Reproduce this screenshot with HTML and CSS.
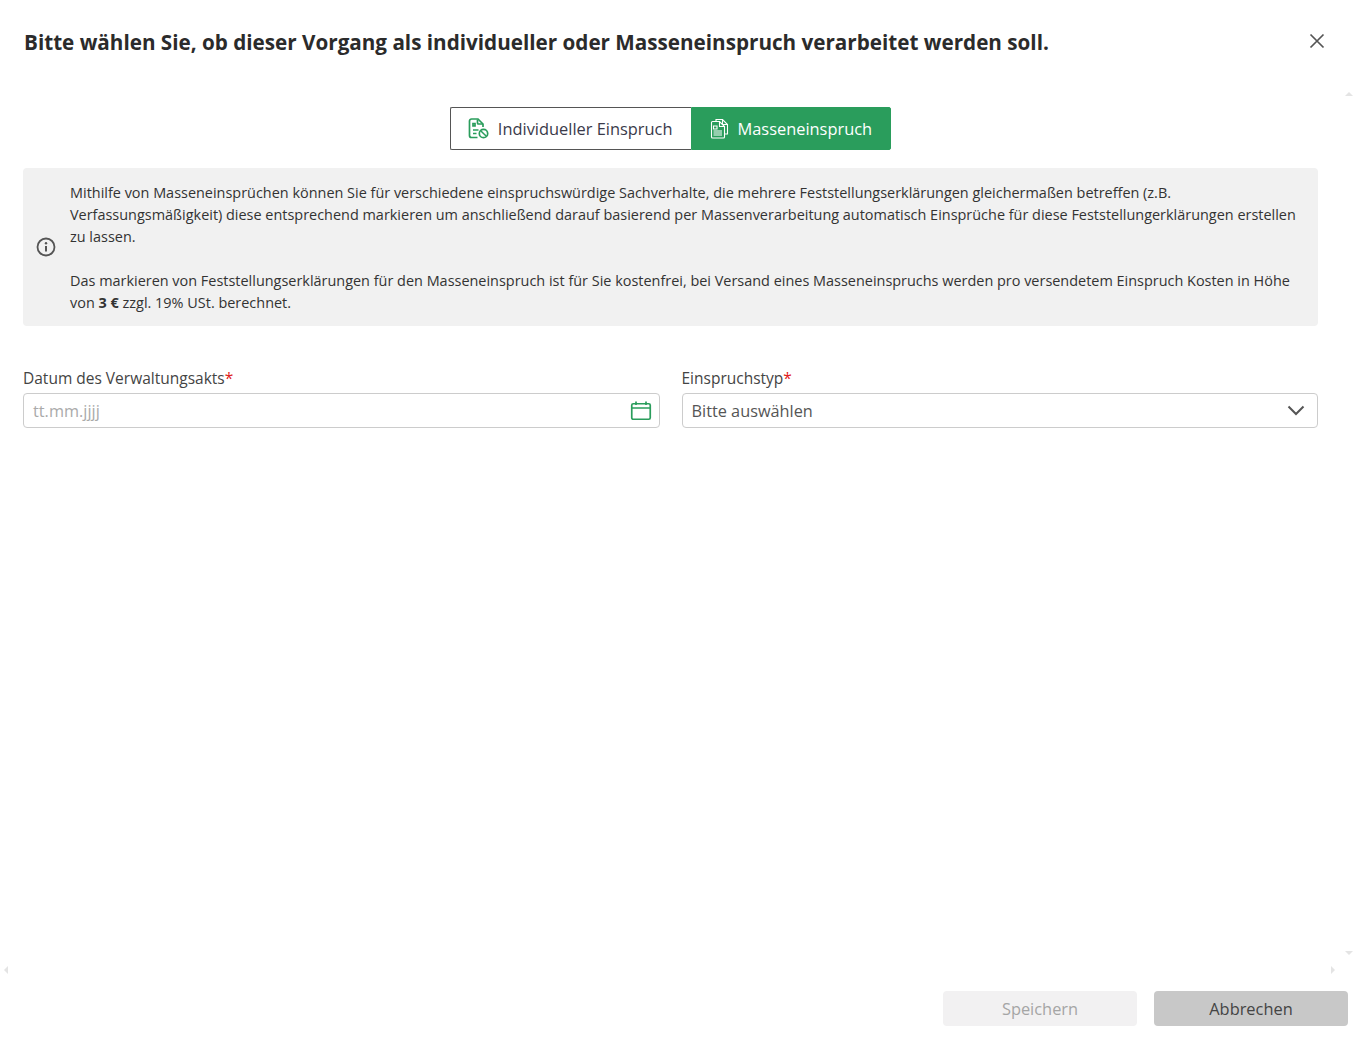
FILE: index.html
```html
<!DOCTYPE html>
<html lang="de">
<head>
    <meta charset="UTF-8">
    <title>Masseneinspruch</title>
    <link rel="stylesheet" href="styles.css">
</head>
<body>
    <div class="dialog">
        <div class="dialog-header">
            <h1>Bitte wählen Sie, ob dieser Vorgang als individueller oder Masseneinspruch verarbeitet werden soll.</h1>
            <button class="close-button" aria-label="Schließen">
                <svg width="16" height="16" viewBox="0 0 16 16"><path d="M1.5 1.5l13 13M14.5 1.5l-13 13" fill="none" stroke="#555" stroke-width="1.7"/></svg>
            </button>
        </div>

        <div class="dialog-body">
            <div class="toggle">
                <button class="toggle-item">
                    <svg width="21" height="22" viewBox="0 0 21 22" fill="none" stroke="#2a9d5c" stroke-width="1.7">
                        <path d="M9.500 19.500H3.500a2 2 0 0 1-2-2V3a2 2 0 0 1 2-2h6.500l5 5v3"/>
                        <path d="M9.500 1.500v3.500a1 1 0 0 0 1 1H15"/>
                        <path d="M5 5.500h2v2.500H5zM5 12h5.500M5 15.500h3.500"/>
                        <circle cx="15.500" cy="15.500" r="4.200"/>
                        <path d="M12.700 12.700l5.600 5.600" stroke-width="1.500"/>
                    </svg>
                    Individueller Einspruch
                </button>
                <button class="toggle-item active">
                    <svg width="19" height="21" viewBox="0 0 19 21" fill="none" stroke="#fff" stroke-width="1.100">
                        <path d="M6 3V1.500h6.500l5 5V16h-3"/>
                        <path d="M12.500 1.500v5h5"/>
                        <path d="M1.500 4.500a1 1 0 0 1 1-1h7l5 5v10.500a1 1 0 0 1-1 1h-11a1 1 0 0 1-1-1z"/>
                        <path d="M9.500 3.500v5h5"/>
                        <path d="M3.500 8h3.500v3H3.500zM3.500 13h8.500M3.500 15h8.500M3.500 17h8.500"/>
                    </svg>
                    Masseneinspruch
                </button>
            </div>

            <div class="info-box">
                <svg class="info-icon" width="20" height="20" viewBox="0 0 20 20" fill="none">
                    <circle cx="10" cy="10" r="8.500" stroke="#555" stroke-width="1.800"/>
                    <circle cx="10" cy="6.200" r="1.200" fill="#555"/>
                    <path d="M10 9v5.500" stroke="#555" stroke-width="2"/>
                </svg>
                <div class="info-text">
                    <p>Mithilfe von Masseneinsprüchen können Sie für verschiedene einspruchswürdige Sachverhalte, die mehrere Feststellungserklärungen gleichermaßen betreffen (z.B. Verfassungsmäßigkeit) diese entsprechend markieren um anschließend darauf basierend per Massenverarbeitung automatisch Einsprüche für diese Feststellungerklärungen erstellen zu lassen.</p>
                    <p>Das markieren von Feststellungserklärungen für den Masseneinspruch ist für Sie kostenfrei, bei Versand eines Masseneinspruchs werden pro versendetem Einspruch Kosten in Höhe von <b>3 €</b> zzgl. 19% USt. berechnet.</p>
                </div>
            </div>

            <div class="form-row">
                <div class="field">
                    <label>Datum des Verwaltungsakts<span class="required">*</span></label>
                    <div class="input-box">
                        <span class="placeholder">tt.mm.jjjj</span>
                        <svg width="22" height="20" viewBox="0 0 22 20" fill="none" stroke="#2a9d5c" stroke-width="1.700">
                            <rect x="1.750" y="2.750" width="18.500" height="15.500" rx="1.500"/>
                            <path d="M1.750 7h18.500M6 .5v3.500M16 .5v3.500"/>
                        </svg>
                    </div>
                </div>
                <div class="field">
                    <label>Einspruchstyp<span class="required">*</span></label>
                    <div class="input-box">
                        <span>Bitte auswählen</span>
                        <svg class="chevron" width="18" height="11" viewBox="0 0 18 11" fill="none"><path d="M1.500 1.500L9 9l7.500-7.500" stroke="#555" stroke-width="2"/></svg>
                    </div>
                </div>
            </div>
        </div>

        <div class="dialog-footer">
            <button class="btn btn-disabled">Speichern</button>
            <button class="btn btn-cancel">Abbrechen</button>
        </div>

        <span class="scroll-arrow arrow-up"></span>
        <span class="scroll-arrow arrow-down"></span>
        <span class="scroll-arrow arrow-left"></span>
        <span class="scroll-arrow arrow-right"></span>
    </div>
</body>
</html>
```

FILE: styles.css
```css
* {
    box-sizing: border-box;
}

body {
    margin: 0;
    font-family: "Open Sans", "Noto Sans", sans-serif;
    color: #333;
    background: #fff;
}

button {
    font-family: inherit;
}

.dialog {
    position: relative;
    display: flex;
    flex-direction: column;
    height: 1037px;
    overflow: hidden;
}

.dialog-header {
    display: flex;
    justify-content: space-between;
    align-items: flex-start;
    padding: 26px 31px 0 24px;
    height: 107px;
}

.dialog-header h1 {
    margin: 0;
    font-size: 20.660px;
    line-height: 32px;
    font-weight: 700;
    color: #2b2b2b;
}

.close-button {
    display: flex;
    background: none;
    border: none;
    padding: 0;
    margin-top: 7px;
}

.dialog-body {
    flex: 1;
    padding: 0 38px 0 23px;
}

.toggle {
    display: flex;
    justify-content: center;
}

.toggle-item {
    display: flex;
    align-items: center;
    gap: 9px;
    height: 43px;
    padding: 0 18px 0 17px;
    background: #fff;
    border: 1px solid #555;
    border-right: none;
    border-radius: 2px 0 0 2px;
    font-size: 16.400px;
    color: #3a3a4a;
}

.toggle-item.active {
    padding: 0 18px 0 18px;
    background: #2a9d5c;
    border-color: #2a9d5c;
    border-right: 1px solid #2a9d5c;
    border-radius: 0 2px 2px 0;
    color: #fff;
}

.info-box {
    display: flex;
    align-items: center;
    gap: 14px;
    margin-top: 18px;
    padding: 14px 18px 12px 13px;
    background: #f1f1f1;
    border-radius: 4px;
}

.info-icon {
    flex-shrink: 0;
    margin-bottom: 2px;
}

.info-text {
    font-size: 14.440px;
    line-height: 22px;
    color: #333;
}

.info-text p {
    margin: 0 0 22px;
}

.info-text p:last-child {
    margin-bottom: 0;
}

.form-row {
    display: grid;
    grid-template-columns: 1fr 1fr;
    gap: 22px;
    margin-top: 41px;
}

.field label {
    display: block;
    font-size: 15.500px;
    line-height: 22px;
    color: #444;
    margin-bottom: 4px;
}

.required {
    color: #e02020;
}

.input-box {
    display: flex;
    justify-content: space-between;
    align-items: center;
    height: 35px;
    padding: 0 7px 0 9px;
    border: 1px solid #ccc;
    border-radius: 4px;
    font-size: 16.300px;
    color: #555;
}

.placeholder {
    color: #aaa;
}

.chevron {
    margin-right: 5px;
}

.dialog-footer {
    display: flex;
    justify-content: flex-end;
    gap: 17px;
    padding: 0 8px 11px 0;
}

.btn {
    width: 194px;
    height: 35px;
    border: none;
    border-radius: 4px;
    font-size: 16.400px;
}

.btn-disabled {
    background: #f2f1f2;
    color: #a5a5a5;
}

.btn-cancel {
    background: #c8c8c8;
    color: #444;
}

/* faint scrollbar arrows of the content pane */
.scroll-arrow {
    position: absolute;
    width: 0;
    height: 0;
    border: 4px solid transparent;
}

.arrow-up {
    top: 88px;
    right: 3px;
    border-bottom-color: #e4e4e4;
}

.arrow-down {
    top: 951px;
    right: 3px;
    border-top-color: #e4e4e4;
}

.arrow-left {
    top: 966px;
    left: 0;
    border-right-color: #e4e4e4;
}

.arrow-right {
    top: 966px;
    right: 17px;
    border-left-color: #e4e4e4;
}
```
